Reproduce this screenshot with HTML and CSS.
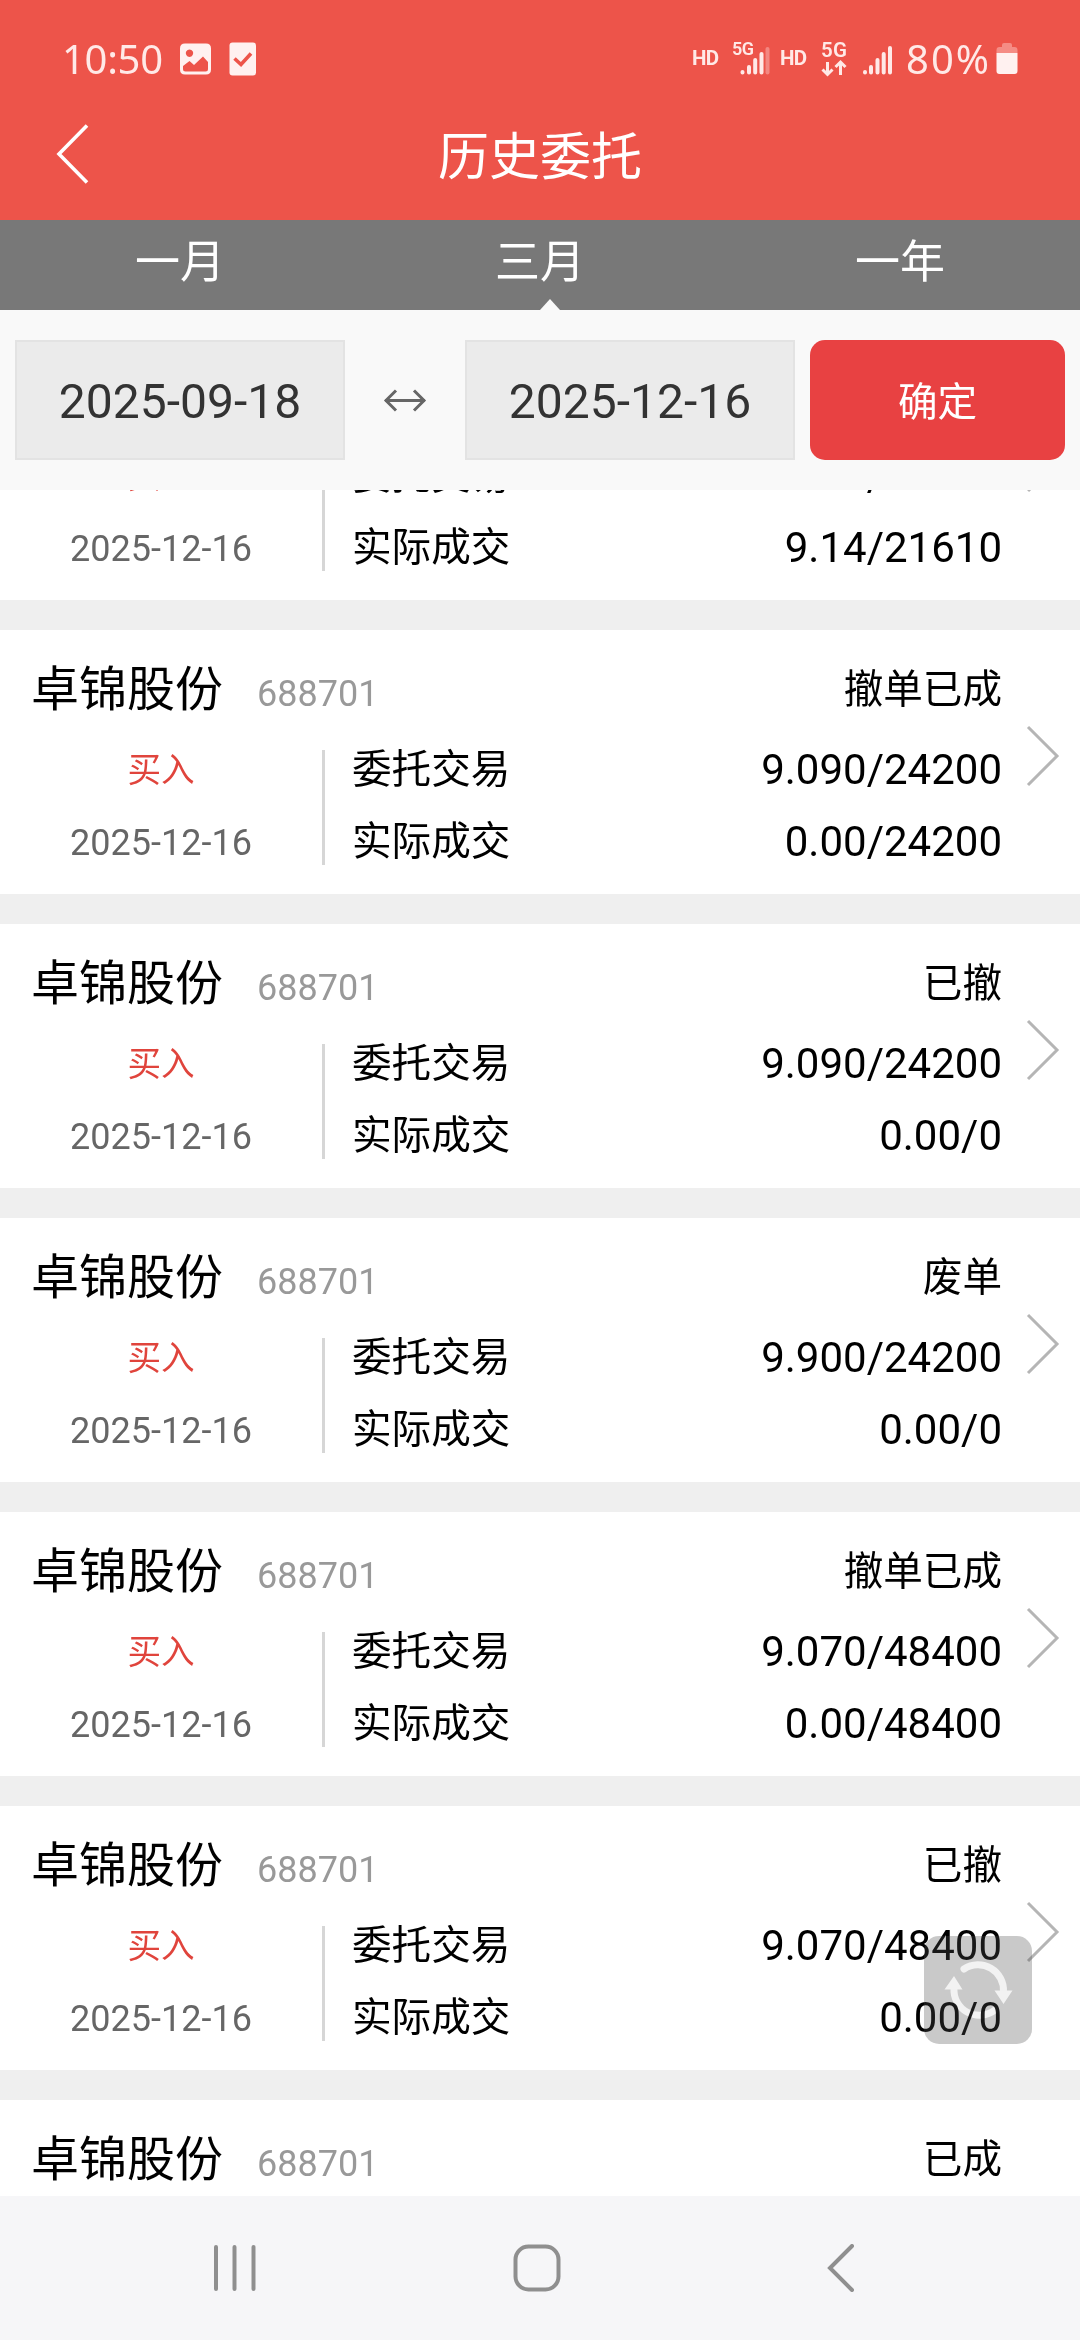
FILE: index.html
```html
<!DOCTYPE html>
<html lang="zh-CN">
<head>
    <meta charset="UTF-8">
    <meta name="viewport" content="width=device-width, initial-scale=1.0">
    <title>历史委托</title>
    <link rel="stylesheet" href="styles.css">
</head>
<body>
    <div class="header">
        <div class="status-bar">
            <span class="time">10:50</span>
            <svg class="icon-image" width="32" height="32" viewBox="0 0 32 32">
                <path fill="#fff1f0" fill-rule="evenodd" d="M5 0.500H26Q31 0.500 31 5.500V26.500Q31 31.500 26 31.500H5Q0 31.500 0 26.500V5.500Q0 0.500 5 0.500ZM9.500 6.500A3.700 3.700 0 1 0 9.510 6.500ZM3 23V26Q3 28.500 5.500 28.500H25.500Q28 28.500 28 26V19L23 13.500L14 22L9.500 18Z"/>
            </svg>
            <svg class="icon-check" width="28" height="34" viewBox="0 0 28 34">
                <rect x="0.500" y="0.500" width="26.500" height="33" rx="3" fill="#fff1f0"/>
                <path d="M5.500 16.500L12 22.500L22 11.500" fill="none" stroke="#ed544a" stroke-width="3.600"/>
            </svg>
            <svg class="signals" width="206" height="40" viewBox="0 0 206 40">
                <g fill="#ffe9e7" font-family="Roboto, sans-serif" font-weight="700">
                    <text x="0" y="26" font-size="20.500" textLength="27">HD</text>
                    <text x="40" y="16" font-size="18" font-weight="600" textLength="22">5G</text>
                    <text x="88" y="26" font-size="20.500" textLength="27">HD</text>
                    <text x="129" y="18" font-size="20.500" font-weight="600" textLength="26">5G</text>
                </g>
                <g stroke="#ffe9e7" stroke-width="4" stroke-linecap="round">
                    <path d="M50.500 33V33.500M57 28V33.500M63.200 21V33.500M69.500 15V33.500"/>
                    <path d="M75.500 10V33.500" stroke-opacity="0.350"/>
                    <path d="M173 33V33.500M179 28V33.500M185.500 21V33.500M191.700 15V33.500M198 9V33.500"/>
                </g>
                <path d="M135.500 23V35M130.500 30.500L135.500 35.500L140.500 30.500M148.500 36V24M143.500 28L148.500 23L153.500 28" fill="none" stroke="#ffe9e7" stroke-width="3"/>
            </svg>
            <span class="battery-text">80%</span>
            <svg class="battery" width="22" height="32" viewBox="0 0 22 32">
                <path d="M0.500 10V7Q0.500 4 3.500 4H6V2Q6 0 8 0H14Q16 0 16 2V4H18.500Q21.500 4 21.500 7V10Z" fill="#f58c85"/>
                <path d="M0.500 10H21.500V28Q21.500 31 18.500 31H3.500Q0.500 31 0.500 28Z" fill="#fff1f0"/>
            </svg>
        </div>
        <div class="title-bar">
            <svg class="back" width="36" height="62" viewBox="0 0 36 62">
                <path d="M32 2.500L4 31L32 59.500" fill="none" stroke="#fff" stroke-width="3.600"/>
            </svg>
            <h1>历史委托</h1>
        </div>
    </div>

    <div class="tabs">
        <div class="tab">一月</div>
        <div class="tab active">三月</div>
        <div class="tab">一年</div>
    </div>

    <div class="filter">
        <div class="date-input">2025-09-18</div>
        <svg class="range" width="44" height="24" viewBox="0 0 44 24">
            <path d="M2 12.500H42M13 2.500L3 12.500L13 22.500M31 2.500L41 12.500L31 22.500" fill="none" stroke="#666" stroke-width="3"/>
        </svg>
        <div class="date-input">2025-12-16</div>
        <button class="confirm">确定</button>
    </div>

    <div class="list" id="list"></div>

    <div class="refresh">
        <svg width="108" height="108" viewBox="0 0 108 108">
            <path d="M40 33A25.500 25.500 0 0 1 79.500 56M71 74A25.500 25.500 0 0 1 30 52" fill="none" stroke="#2b2b2b" stroke-width="7" stroke-linecap="round"/>
            <path d="M70.500 54.500H88.500L79.500 68ZM20.500 53.500H38.500L30 40Z" fill="#2b2b2b"/>
        </svg>
    </div>

    <div class="nav-bar">
        <svg width="48" height="48" viewBox="0 0 48 48">
            <path d="M5 3V45M23.500 3V45M42.500 3V45" stroke="#8f8f8f" stroke-width="4" stroke-linecap="round"/>
        </svg>
        <svg width="48" height="48" viewBox="0 0 48 48">
            <rect x="2.500" y="2.500" width="43" height="43" rx="13" fill="none" stroke="#8f8f8f" stroke-width="4"/>
        </svg>
        <svg width="48" height="48" viewBox="0 0 48 48">
            <path d="M37 2L15 24L37 46" fill="none" stroke="#8f8f8f" stroke-width="4" stroke-linecap="round"/>
        </svg>
    </div>

    <script>
        const orders = [
            { status: "已成", order: "9.140/21610", deal: "9.14/21610" },
            { status: "撤单已成", order: "9.090/24200", deal: "0.00/24200" },
            { status: "已撤", order: "9.090/24200", deal: "0.00/0" },
            { status: "废单", order: "9.900/24200", deal: "0.00/0" },
            { status: "撤单已成", order: "9.070/48400", deal: "0.00/48400" },
            { status: "已撤", order: "9.070/48400", deal: "0.00/0" },
            { status: "已成", order: "9.070/48400", deal: "9.07/48400" }
        ];

        document.getElementById("list").innerHTML = orders.map(o => `
            <div class="card">
                <div class="card-head">
                    <span class="name">卓锦股份</span>
                    <span class="code">688701</span>
                    <span class="status">${o.status}</span>
                </div>
                <div class="card-body">
                    <div class="side">
                        <span class="buy">买入</span>
                        <span class="date">2025-12-16</span>
                    </div>
                    <div class="detail">
                        <div class="row"><span>委托交易</span><span class="num">${o.order}</span></div>
                        <div class="row"><span>实际成交</span><span class="num">${o.deal}</span></div>
                    </div>
                </div>
                <svg class="arrow" width="36" height="62" viewBox="0 0 36 62">
                    <path d="M3 2L32 31L3 60" fill="none" stroke="#b5b5b5" stroke-width="3"/>
                </svg>
            </div>`).join("");
    </script>
</body>
</html>
```
FILE: styles.css
```css
* {
    box-sizing: border-box;
}

body {
    margin: 0;
    height: 2340px;
    display: flex;
    flex-direction: column;
    overflow: hidden;
    background-color: #efefef;
    font-family: Roboto, "Noto Sans CJK SC", sans-serif;
    color: #000;
}

svg {
    display: block;
    flex: none;
}

.header {
    height: 220px;
    flex: none;
    background-color: #ed544a;
    color: #fff;
}

.status-bar {
    height: 90px;
    padding: 28px 62px 0 62px;
    display: flex;
    align-items: center;
    color: #ffe9e7;
    font-family: "Noto Sans", sans-serif;
    font-size: 40px;
    line-height: 60px;
}

.time {
    width: 118px;
    letter-spacing: -0.3px;
}

.icon-check {
    margin-left: 17px;
}

.signals {
    margin-left: auto;
}

.battery-text {
    width: 90px;
    margin-left: 8px;
    letter-spacing: 2px;
}

.title-bar {
    height: 130px;
    position: relative;
    display: flex;
    justify-content: center;
}

.back {
    position: absolute;
    left: 55px;
    top: 33px;
}

h1 {
    margin: 0;
    font-size: 51px;
    font-weight: 400;
    line-height: 135px;
}

.tabs {
    height: 90px;
    flex: none;
    display: flex;
    background-color: #787878;
    color: #fff;
    font-size: 45px;
    line-height: 86px;
    text-align: center;
}

.tab {
    flex: 1;
    position: relative;
}

.tab.active::after {
    content: "";
    position: absolute;
    bottom: 0;
    left: 180px;
    border: 10px solid transparent;
    border-top: none;
    border-bottom: 11px solid #f9f9f9;
}

.filter {
    height: 180px;
    flex: none;
    padding: 30px 15px;
    display: flex;
    align-items: center;
    background-color: #f9f9f9;
}

.date-input {
    width: 330px;
    height: 120px;
    border: 2px solid #e3e3e3;
    background-color: #ebebeb;
    color: #333;
    font-size: 48px;
    line-height: 120px;
    text-align: center;
}

.range {
    margin: 0 38px;
}

.confirm {
    width: 255px;
    height: 120px;
    margin-left: 15px;
    padding: 0 0 4px;
    border: none;
    border-radius: 15px;
    background-color: #e84142;
    color: #fff;
    font-family: inherit;
    font-size: 39.6px;
}

.list {
    flex: 1;
    min-height: 0;
    overflow: hidden;
    display: flex;
    flex-direction: column;
    justify-content: flex-start;
    gap: 30px;
}

.card {
    height: 264px;
    flex: none;
    position: relative;
    background-color: #fff;
    font-size: 39.6px;
}

/* list is scrolled part way into the first order */
.card:first-child {
    margin-top: -154px;
}

.card-head {
    height: 120px;
    padding: 0 78px 0 31px;
    display: flex;
    align-items: flex-start;
}

.name {
    font-size: 48px;
    line-height: 119px;
}

.code {
    margin-left: 34px;
    font-size: 36px;
    line-height: 129px;
    color: #999;
}

.status {
    margin-left: auto;
    line-height: 119px;
}

.card-body {
    display: flex;
    height: 115px;
}

.side {
    width: 325px;
    border-right: 3px solid #d6d6d6;
    display: flex;
    flex-direction: column;
    text-align: center;
}

.buy {
    height: 72px;
    font-size: 33.6px;
    line-height: 42px;
    color: #e0443c;
}

.date {
    font-size: 36px;
    line-height: 42px;
    color: #666;
}

.detail {
    flex: 1;
    padding: 0 78px 0 27px;
}

.row {
    height: 72px;
    display: flex;
    justify-content: space-between;
    line-height: 40px;
}

.num {
    font-size: 42px;
    line-height: 39px;
}

.arrow {
    position: absolute;
    left: 1025px;
    top: 95px;
}

.refresh {
    position: absolute;
    left: 924px;
    top: 1936px;
    width: 108px;
    height: 108px;
    border-radius: 15px;
    background-color: rgba(78, 78, 78, 0.305);
}

/* lightens the button but leaves the figures under it dark */
.refresh svg {
    mix-blend-mode: color-dodge;
}

.nav-bar {
    height: 144px;
    flex: none;
    padding-left: 211px;
    display: flex;
    align-items: center;
    gap: 254px;
    background-color: #f6f6f8;
}
```
